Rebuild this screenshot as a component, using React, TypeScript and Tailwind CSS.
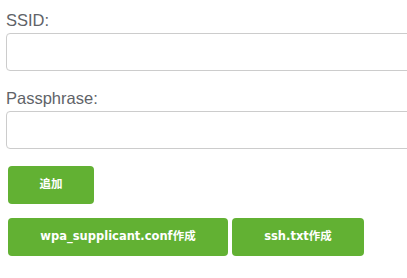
import React from 'react'

export default function App() {
  return (
    <div className="h-[278px] w-[407px] overflow-hidden bg-white">
      <div className="w-[460px] px-[6px] pt-[8px]" style={{ fontFamily: '"Liberation Sans", Arial, sans-serif' }}>
        {/* SSID */}
        <label className="block text-[16.5px] leading-[24px] text-[#5f6368]">SSID:</label>
        <input type="text" className="mt-[1px] block h-[38px] w-full rounded-[4px] border border-[#ccc] px-3 outline-none" />

        {/* Passphrase */}
        <label className="mt-[15px] block text-[16.5px] leading-[24px] text-[#5f6368]">Passphrase:</label>
        <input type="password" className="mt-[1px] block h-[38px] w-full rounded-[4px] border border-[#ccc] px-3 outline-none" />

        <div
          className="ml-[2px] mt-[17px] flex flex-col gap-[14px]"
          style={{ fontFamily: '"DejaVu Sans", "Noto Sans CJK JP", sans-serif' }}
        >
          <div>
            <button className="h-[38px] w-[86px] rounded-[4px] bg-[#62b133] text-[11.5px] font-bold text-white">
              追加
            </button>
          </div>
          <div className="flex gap-[4px]">
            <button className="h-[38px] w-[220px] rounded-[4px] bg-[#62b133] text-[11.5px] font-bold text-white">
              wpa_supplicant.conf作成
            </button>
            <button className="h-[38px] w-[132px] rounded-[4px] bg-[#62b133] text-[11.5px] font-bold text-white">
              ssh.txt作成
            </button>
          </div>
        </div>
      </div>
    </div>
  )
}
